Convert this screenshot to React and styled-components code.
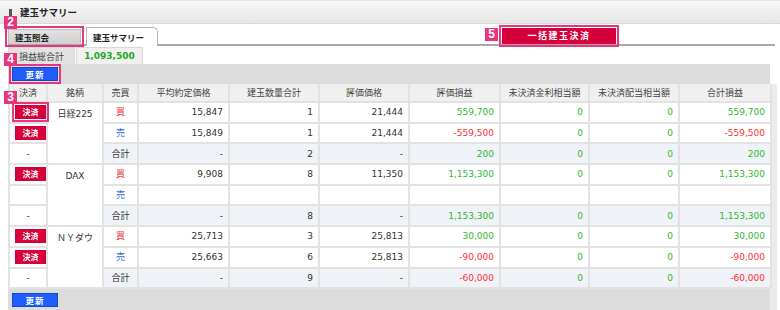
import React from "react"
import styled, { createGlobalStyle, css } from "styled-components"

const GlobalStyle = createGlobalStyle`
	body {
		margin: 0;
		background: #fff;
		font-family: "DejaVu Sans", "Noto Sans CJK JP", sans-serif;
		color: #333;
	}
`

const PINK = "#e8367e"

const marked = css`
	${p => p.$marked && `outline: 2px solid ${PINK}; outline-offset: 1px;`}
`

const Page = styled.div`
	position: relative;
	width: 780px;
	height: 310px;
	overflow: hidden;
`

const TitleBar = styled.div`
	height: 22px;
	border-top: 1px solid #e6e6e6;
	border-bottom: 1px solid #d8d8d8;
	background: linear-gradient(#f7f7f7, #e6e6e6);
	display: flex;
	align-items: center;
	padding-left: 9px;
	gap: 8px;
	font-family: "Noto Sans CJK JP", sans-serif;
	font-weight: bold;
	font-size: 9.5px;
	color: #222;
`

const TitleMark = styled.span`
	width: 3px;
	height: 9px;
	background: #555;
	margin-top: 3px;
`

const Body = styled.div`
	padding: 3px 5px 0 8px;
`

const TabRow = styled.div`
	display: flex;
	align-items: flex-end;
	height: 17px;
	border-bottom: 2px solid #a9a9a9;
`

const Tab = styled.div`
	box-sizing: border-box;
	width: ${p => p.$w}px;
	margin-right: 5px;
	padding-left: 6px;
	display: flex;
	align-items: center;
	font-family: "Noto Sans CJK JP", sans-serif;
	font-weight: bold;
	font-size: 8.5px;
	color: #222;
	background: ${p => (p.$active ? "#fff" : "linear-gradient(#e2e2e2, #cfcfcf)")};
	border: 1px solid ${p => (p.$active ? "#b5b5b5" : "#bdbdbd")};
	border-bottom: none;
	border-top-right-radius: ${p => (p.$active ? "5px" : "0")};
	margin-bottom: ${p => (p.$active ? "-2px" : "0")};
	height: ${p => (p.$active ? "19px" : "15px")};
	${marked}
`

const BulkButton = styled.div`
	margin-left: 339px;
	align-self: center;
	width: 114px;
	height: 16px;
	background: #d6003a;
	color: #fff;
	font-family: "Noto Sans CJK JP", sans-serif;
	font-weight: bold;
	font-size: 9px;
	letter-spacing: 1.5px;
	display: flex;
	align-items: center;
	justify-content: center;
	${marked}
`

const SummaryRow = styled.div`
	display: flex;
	gap: 1px;
	margin-top: 1px;
	height: 17px;
`

const SummaryCell = styled.div`
	width: ${p => p.$w}px;
	box-sizing: border-box;
	display: flex;
	align-items: center;
	justify-content: center;
	border: 1px solid #d8d8d8;
	border-bottom: none;
	background: ${p => (p.$value ? "#f0f0f0" : "#e2e2e2")};
	font-family: ${p => (p.$value ? '"DejaVu Sans"' : '"Noto Sans CJK JP"')}, sans-serif;
	font-size: 9px;
	font-weight: ${p => (p.$value ? "bold" : "normal")};
	color: ${p => (p.$value ? "#22aa22" : "#444")};
`

const Band = styled.div`
	width: 762px;
	height: ${p => p.$h}px;
	background: #dcdcdc;
	display: flex;
	align-items: center;
	padding-left: 4px;
	box-sizing: border-box;
`

const UpdateButton = styled.div`
	width: 46px;
	height: 14px;
	box-sizing: border-box;
	background: #1f5dff;
	border: 1px solid #1547c4;
	color: #fff;
	font-family: "Noto Sans CJK JP", sans-serif;
	font-weight: bold;
	font-size: 8.5px;
	letter-spacing: 1px;
	display: flex;
	align-items: center;
	justify-content: center;
	${marked}
`

const TableWrap = styled.div`
	width: 762px;
	border-right: 7px solid #ebebeb;
`

const Table = styled.table`
	width: 762px;
	table-layout: fixed;
	border-collapse: collapse;
	font-size: 9px;
`

const Th = styled.th`
	height: 17px;
	padding: 0;
	background: #f0f0f0;
	border: 2px solid #e2e2e2;
	border-top: none;
	font-family: "Noto Sans CJK JP", sans-serif;
	font-weight: normal;
	font-size: 9px;
	color: #444;
`

const Td = styled.td`
	height: 18.7px;
	padding: 0 5px;
	border: 2px solid #e2e2e2;
	background: ${p => (p.$sum ? "#eff2f7" : "#fff")};
	text-align: ${p => p.$align || "right"};
	vertical-align: ${p => (p.$top ? "top" : "middle")};
	padding-top: ${p => (p.$top ? "5px" : "0")};
	color: ${p =>
		p.$tone === "g" ? "#2fb82f" :
		p.$tone === "r" ? "#ff3030" :
		p.$tone === "buy" ? "#e8313d" :
		p.$tone === "sell" ? "#2f6fd8" : "#333"};
	white-space: nowrap;
	line-height: 12px;
`

const SettleButton = styled.div`
	width: 31px;
	height: 14px;
	margin: 0 auto;
	background: #d6003a;
	color: #fff;
	font-family: "Noto Sans CJK JP", sans-serif;
	font-weight: bold;
	font-size: 8px;
	display: flex;
	align-items: center;
	justify-content: center;
	${marked}
`

const Badge = styled.div`
	position: absolute;
	left: ${p => p.$x}px;
	top: ${p => p.$y}px;
	width: 13px;
	height: 13px;
	background: ${PINK};
	color: #fff;
	font-family: "Liberation Sans", sans-serif;
	font-weight: bold;
	font-size: 12px;
	line-height: 13px;
	text-align: center;
`

const cols = [38, 56, 35, 91, 90, 90, 91, 89, 90, 92]
const heads = ["決済", "銘柄", "売買", "平均約定価格", "建玉数量合計", "評価価格", "評価損益", "未決済金利相当額", "未決済配当相当額", "合計損益"]

const tone = v => (v === "" || v === "-" ? undefined : v.startsWith("-") ? "r" : "g")

const groups = [
	{
		name: "日経225",
		rows: [
			{ btn: true, side: "買", avg: "15,847", qty: "1", price: "21,444", pl: "559,700", total: "559,700", marked: true },
			{ btn: true, side: "売", avg: "15,849", qty: "1", price: "21,444", pl: "-559,500", total: "-559,500" },
		],
		sum: { qty: "2", pl: "200", total: "200" },
	},
	{
		name: "DAX",
		rows: [
			{ btn: true, side: "買", avg: "9,908", qty: "8", price: "11,350", pl: "1,153,300", total: "1,153,300" },
			{ btn: false, side: "売", avg: "", qty: "", price: "", pl: "", total: "", empty: true },
		],
		sum: { qty: "8", pl: "1,153,300", total: "1,153,300" },
	},
	{
		name: "ＮＹダウ",
		rows: [
			{ btn: true, side: "買", avg: "25,713", qty: "3", price: "25,813", pl: "30,000", total: "30,000" },
			{ btn: true, side: "売", avg: "25,663", qty: "6", price: "25,813", pl: "-90,000", total: "-90,000" },
		],
		sum: { qty: "9", pl: "-60,000", total: "-60,000" },
	},
]

const Group = ({ g }) => (
	<>
		{g.rows.map((r, i) => (
			<tr key={i}>
				<Td $align="center">{r.btn && <SettleButton $marked={r.marked}>決済</SettleButton>}</Td>
				{i === 0 && <Td rowSpan={3} $align="center" $top>{g.name}</Td>}
				<Td $align="center" $tone={r.side === "買" ? "buy" : "sell"}>{r.side}</Td>
				<Td>{r.avg}</Td>
				<Td>{r.qty}</Td>
				<Td>{r.price}</Td>
				<Td $tone={tone(r.pl)}>{r.pl}</Td>
				<Td $tone="g">{r.empty ? "" : "0"}</Td>
				<Td $tone="g">{r.empty ? "" : "0"}</Td>
				<Td $tone={tone(r.total)}>{r.total}</Td>
			</tr>
		))}
		<tr>
			<Td $align="center">-</Td>
			<Td $align="center" $sum>合計</Td>
			<Td $sum>-</Td>
			<Td $sum>{g.sum.qty}</Td>
			<Td $sum>-</Td>
			<Td $sum $tone={tone(g.sum.pl)}>{g.sum.pl}</Td>
			<Td $sum $tone="g">0</Td>
			<Td $sum $tone="g">0</Td>
			<Td $sum $tone={tone(g.sum.total)}>{g.sum.total}</Td>
		</tr>
	</>
)

export default function App() {
	return (
		<Page>
			<GlobalStyle />
			<TitleBar>
				<TitleMark />
				建玉サマリー
			</TitleBar>
			<Body>
				<TabRow>
					<Tab $w={73} $marked>建玉照会</Tab>
					<Tab $w={72} $active>建玉サマリー</Tab>
					<BulkButton $marked>一括建玉決済</BulkButton>
				</TabRow>
				<SummaryRow>
					<SummaryCell $w={67}>損益総合計</SummaryCell>
					<SummaryCell $w={67} $value>1,093,500</SummaryCell>
				</SummaryRow>
				<Band $h={20}>
					<UpdateButton $marked>更新</UpdateButton>
				</Band>
				<TableWrap>
					<Table>
						<colgroup>
							{cols.map((w, i) => <col key={i} style={{ width: w }} />)}
						</colgroup>
						<thead>
							<tr>{heads.map(h => <Th key={h}>{h}</Th>)}</tr>
						</thead>
						<tbody>
							{groups.map(g => <Group key={g.name} g={g} />)}
						</tbody>
					</Table>
					<Band $h={22}>
						<UpdateButton>更新</UpdateButton>
					</Band>
				</TableWrap>
			</Body>
			<Badge $x={4} $y={16}>2</Badge>
			<Badge $x={4} $y={53}>4</Badge>
			<Badge $x={4} $y={91}>3</Badge>
			<Badge $x={485} $y={28}>5</Badge>
		</Page>
	)
}
